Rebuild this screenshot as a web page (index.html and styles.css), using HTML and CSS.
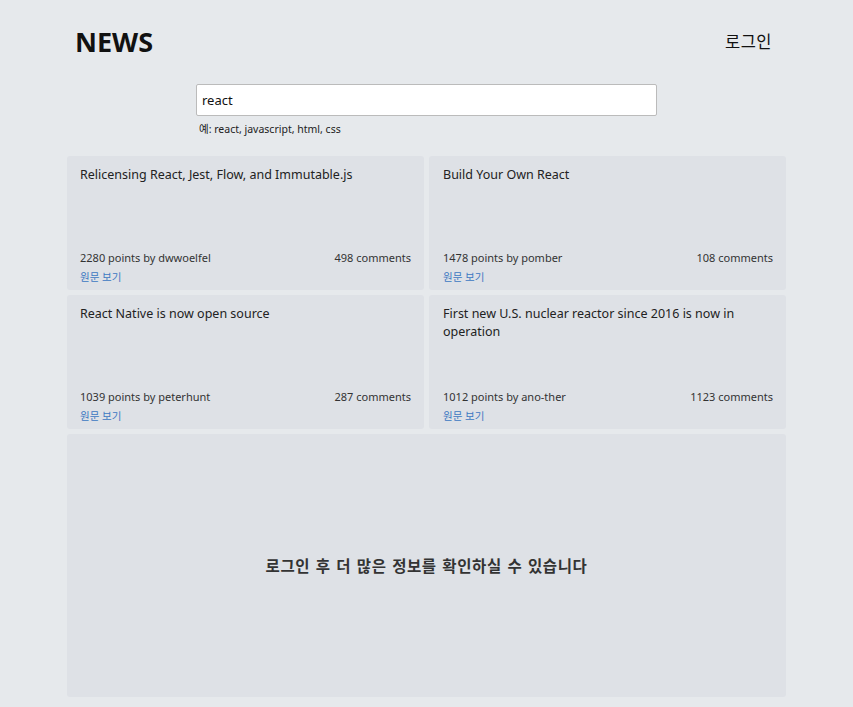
FILE: index.html
```html
<!DOCTYPE html>
<html lang="ko">
<head>
<meta charset="utf-8">
<link rel="stylesheet" href="styles.css">
</head>
<body>
<div class="page">
  <header class="header">
    <h1 class="logo">NEWS</h1>
    <a class="login" href="#">로그인</a>
  </header>
  <div class="search">
    <input class="search-input" type="text" value="react">
    <p class="hint">예: react, javascript, html, css</p>
  </div>
  <div class="grid">
    <div class="card">
      <div class="title">Relicensing React, Jest, Flow, and Immutable.js</div>
      <div class="meta"><span>2280 points by dwwoelfel</span><span>498 comments</span></div>
      <a class="link" href="#">원문 보기</a>
    </div>
    <div class="card">
      <div class="title">Build Your Own React</div>
      <div class="meta"><span>1478 points by pomber</span><span>108 comments</span></div>
      <a class="link" href="#">원문 보기</a>
    </div>
    <div class="card">
      <div class="title">React Native is now open source</div>
      <div class="meta"><span>1039 points by peterhunt</span><span>287 comments</span></div>
      <a class="link" href="#">원문 보기</a>
    </div>
    <div class="card">
      <div class="title">First new U.S. nuclear reactor since 2016 is now in operation</div>
      <div class="meta"><span>1012 points by ano-ther</span><span>1123 comments</span></div>
      <a class="link" href="#">원문 보기</a>
    </div>
    <div class="locked">로그인 후 더 많은 정보를 확인하실 수 있습니다</div>
  </div>
</div>
</body>
</html>
```
FILE: styles.css
```css
* { box-sizing: border-box; }
html, body { margin: 0; padding: 0; }
body {
  background: #e6e9ec;
  font-family: "Noto Sans", "Noto Sans CJK KR", sans-serif;
  color: #222;
}
.page {
  width: 719px;
  margin: 0 auto;
  padding-top: 22px;
}
.header {
  display: flex;
  justify-content: space-between;
  align-items: center;
  padding: 0 14px 0 8px;
  height: 38px;
}
.logo {
  margin: 0;
  font-size: 27px;
  font-weight: 700;
  color: #111;
  font-family: "Noto Sans", sans-serif;
}
.login {
  font-size: 16.5px;
  color: #111;
  text-decoration: none;
  letter-spacing: 0.5px;
}
.search {
  width: 461px;
  margin: 24px auto 0;
}
.search-input {
  display: block;
  width: 100%;
  height: 32px;
  border: 1px solid #bbb;
  border-radius: 2px;
  padding: 0 5px;
  font-size: 13px;
  font-family: "Noto Sans", sans-serif;
  color: #111;
  background: #fff;
  outline: none;
}
.hint {
  margin: 5px 0 0 3px;
  font-size: 10.5px;
  color: #222;
}
.grid {
  margin-top: 20px;
  display: grid;
  grid-template-columns: 1fr 1fr;
  grid-template-rows: 134px 134px 263px;
  gap: 5px;
}
.card {
  background: #dee1e6;
  border-radius: 3px;
  padding: 10px 13px 4px 13px;
  display: flex;
  flex-direction: column;
}
.card:nth-child(even) {
  padding-left: 14px;
}
.title {
  font-size: 12.5px;
  line-height: 18px;
  color: #222;
  flex: 1;
}
.meta {
  display: flex;
  justify-content: space-between;
  font-size: 11px;
  color: #333;
  line-height: 16px;
  margin-top: 1px;
  margin-bottom: 2px;
}
.link {
  font-size: 10.5px;
  color: #3c78c2;
  text-decoration: none;
  line-height: 18px;
}
.locked {
  grid-column: 1 / 3;
  background: #dee1e6;
  border-radius: 3px;
  display: flex;
  align-items: center;
  justify-content: center;
  font-size: 15.5px;
  font-weight: 700;
  color: #333;
  letter-spacing: 0.6px;
  word-spacing: 1px;
}
```
